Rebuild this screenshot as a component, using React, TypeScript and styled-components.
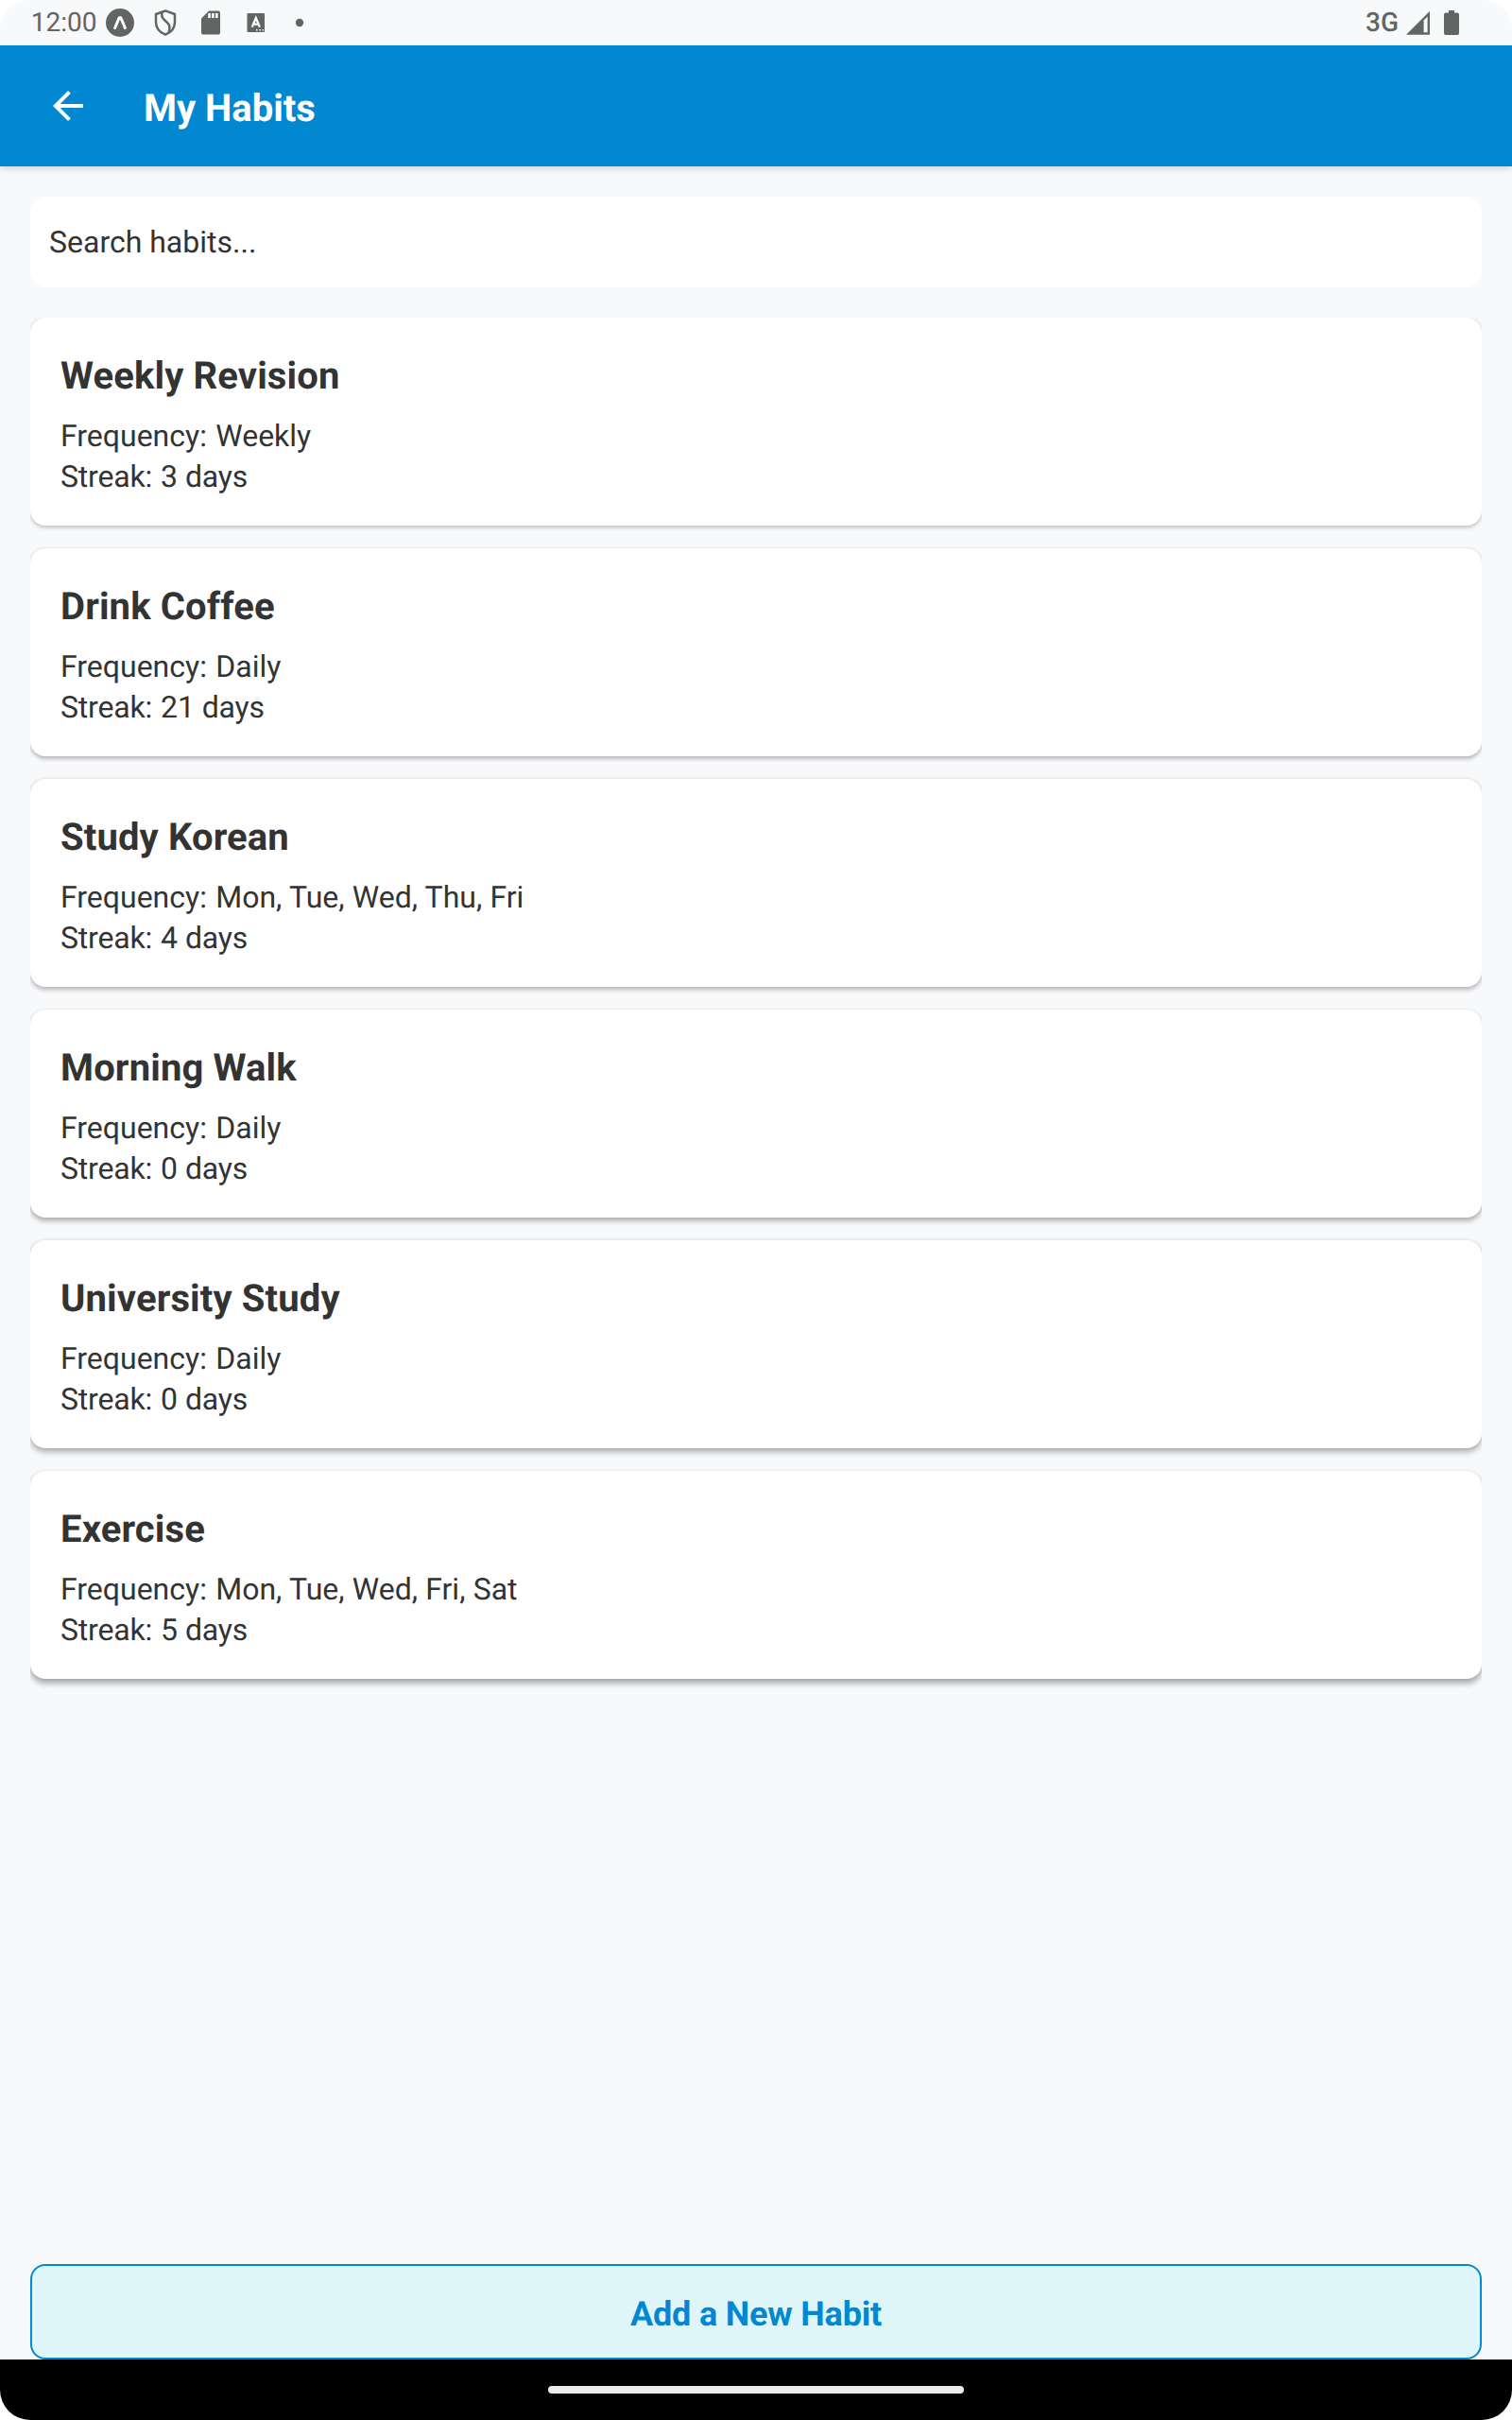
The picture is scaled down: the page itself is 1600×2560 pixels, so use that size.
import React from "react";
import styled, { createGlobalStyle } from "styled-components";

const color = {
  background: "#f8f9fb",
  primary: "#0288d1",
  surface: "#ffffff",
  text: "#333333",
  status: "#636564",
  action: "#def6f9",
};

const GlobalStyle = createGlobalStyle`
  body {
    margin: 0;
    background: #ffffff;
  }
  * {
    box-sizing: border-box;
  }
`;

const Screen = styled.div`
  display: flex;
  flex-direction: column;
  width: 1600px;
  height: 2560px;
  overflow: hidden;
  border-radius: 32px;
  background: ${color.background};
  color: ${color.text};
  font-family: Roboto, "Liberation Sans", sans-serif;
  text-rendering: geometricPrecision;
`;

const StatusBar = styled.div`
  z-index: 1;
  display: flex;
  justify-content: space-between;
  flex: none;
  height: 48px;
  padding: 0 56px 0 32.7px;
  background: ${color.background};
  color: ${color.status};
`;

const StatusGroup = styled.div<{ $gap?: number }>`
  display: flex;
  align-items: center;
  gap: ${({ $gap }) => $gap ?? 0}px;
`;

const Clock = styled.span`
  width: 70px;
  margin-right: 6.3px;
  font-size: 28px;
  line-height: 46px;
  white-space: nowrap;
`;

const Network = styled.span`
  width: 36px;
  margin-right: 7px;
  font-size: 28px;
  font-weight: 500;
  line-height: 48px;
  white-space: nowrap;
`;

const Glyph = styled.svg`
  display: block;
  flex: none;
`;

const NotificationIcons = styled.div`
  display: flex;
  margin-left: 6px;
`;

const Header = styled.header`
  display: flex;
  align-items: center;
  flex: none;
  height: 128px;
  padding-left: 48px;
  background: ${color.primary};
  color: #ffffff;
  box-shadow: 0 2px 8px rgba(0, 0, 0, 0.16);
`;

const BackButton = styled.button`
  display: flex;
  margin: 0 56px 0 0;
  padding: 0;
  border: 0;
  background: none;
  color: inherit;
`;

const HeaderTitle = styled.h1`
  margin: 0;
  padding-top: 5px;
  font-size: 40px;
  font-weight: 700;
  line-height: 48px;
`;

const Content = styled.main`
  display: flex;
  flex-direction: column;
  flex: 1;
  min-height: 0;
  padding: 32px 32px 0;
`;

const SearchInput = styled.input`
  flex: none;
  height: 96px;
  margin: 0 0 32px;
  padding: 0 20px;
  border: 0;
  border-radius: 16px;
  outline: none;
  background: ${color.surface};
  color: ${color.text};
  font: 400 32px / 40px Roboto, "Liberation Sans", sans-serif;
  text-rendering: inherit;

  &::placeholder {
    color: ${color.text};
    opacity: 1;
  }
`;

const HabitList = styled.div`
  display: flex;
  flex-direction: column;
  flex: 1;
  gap: 24px;
  min-height: 0;
  overflow: hidden;
`;

const HabitCard = styled.article<{ $depth: number }>`
  flex: none;
  height: 220px;
  padding: 35px 32px 0;
  border-radius: 16px;
  background: ${color.surface};
  box-shadow: 0 ${({ $depth }) => 2 + $depth * 0.45}px
      ${({ $depth }) => 4 + $depth * 0.5}px
      rgba(0, 0, 0, ${({ $depth }) => 0.22 + $depth * 0.02}),
    0 0 3px rgba(0, 0, 0, 0.08);
`;

const HabitName = styled.h2`
  margin: 0 0 15px;
  font-size: 40px;
  font-weight: 700;
  line-height: 54px;
  letter-spacing: 0.13px;
`;

const HabitDetail = styled.p<{ $tracking?: number }>`
  margin: 0;
  font-size: 32px;
  line-height: 43px;
  letter-spacing: ${({ $tracking }) => $tracking ?? 0}px;
  word-spacing: 0.3px;
`;

const DetailLabel = styled.span`
  margin-right: 1.1px;
`;

const AddButton = styled.button`
  flex: none;
  height: 101px;
  margin: 0;
  padding: 5px 0 0;
  border: 2px solid ${color.primary};
  border-radius: 16px;
  background: ${color.action};
  color: ${color.primary};
  font: 700 36px / 44px Roboto, "Liberation Sans", sans-serif;
  letter-spacing: -0.17px;
  text-rendering: inherit;
`;

const NavigationBar = styled.footer`
  display: flex;
  align-items: center;
  justify-content: center;
  flex: none;
  height: 64px;
  background: #000000;
`;

const HomeHandle = styled.div`
  width: 440px;
  height: 8px;
  border-radius: 4px;
  background: #ebebeb;
`;

const habits = [
  { name: "Weekly Revision", frequency: "Weekly", streak: 3 },
  { name: "Drink Coffee", frequency: "Daily", streak: 21 },
  { name: "Study Korean", frequency: "Mon, Tue, Wed, Thu, Fri", streak: 4 },
  { name: "Morning Walk", frequency: "Daily", streak: 0 },
  { name: "University Study", frequency: "Daily", streak: 0 },
  { name: "Exercise", frequency: "Mon, Tue, Wed, Fri, Sat", streak: 5 },
];

const ExpoIcon = () => (
  <Glyph width="36" height="48" viewBox="0 0 36 48">
    <circle cx="18" cy="24" r="15" fill={color.status} />
    <path d="M12.6 29.6 17.2 18.6h1.6l4.6 11" fill="none" stroke="#fff" strokeWidth="2.9" strokeLinecap="round" strokeLinejoin="round" />
  </Glyph>
);

const ShieldIcon = () => (
  <Glyph width="48" height="48" viewBox="0 0 48 48" fill="none" stroke={color.status} strokeWidth="2.5">
    <path d="M24 11.4 34 15v8.5c0 6.2-4.2 10.8-10 13.2-5.8-2.4-10-7-10-13.2V15Z" strokeLinejoin="round" />
    <path d="M20.7 12.8c-1.4 3.7-.2 6.3 2.7 8.7 4 3.3 6.3 5.3 4.4 12.3" />
  </Glyph>
);

const SdCardIcon = () => (
  <Glyph width="48" height="48" viewBox="0 0 48 48">
    <path d="M22 11.5h10a2 2 0 0 1 2 2v21a2 2 0 0 1-2 2H16a2 2 0 0 1-2-2V19.5Z" fill={color.status} />
    <path d="M21.2 14h2.6v5h-2.6zM25.1 14h2.6v5h-2.6zM29 14h2.6v5H29z" fill="#fff" />
  </Glyph>
);

const KeyboardIcon = () => (
  <Glyph width="48" height="48" viewBox="0 0 48 48">
    <rect x="14.5" y="14" width="18.5" height="20" rx="1" fill={color.status} />
    <path d="m19.8 28.7 4-9.7 4 9.7M21 25.7h5.6" fill="none" stroke="#fff" strokeWidth="2.2" />
    <path d="M24 31h1.5v1.5H24zM27.2 31h1.5v1.5h-1.5zM30.4 31h1.5v1.5h-1.5z" fill="#fff" />
  </Glyph>
);

const DotIcon = () => (
  <Glyph width="48" height="48" viewBox="0 0 48 48">
    <circle cx="22" cy="24" r="4.2" fill={color.status} />
  </Glyph>
);

const SignalIcon = () => (
  <Glyph width="26" height="48" viewBox="0 0 26 48">
    <path d="M25 11.7V36.7H0Z" fill={color.status} />
    <path d="M18.6 21.5 22.6 17.5V34.3h-4Z" fill={color.background} />
  </Glyph>
);

const BatteryIcon = () => (
  <Glyph width="16" height="48" viewBox="0 0 16 48">
    <path d="M5 11h6v2.5h3a2 2 0 0 1 2 2V35a2 2 0 0 1-2 2H2a2 2 0 0 1-2-2V15.5a2 2 0 0 1 2-2h3Z" fill={color.status} />
  </Glyph>
);

const BackIcon = () => (
  <Glyph width="48" height="48" viewBox="0 0 24 24" fill="currentColor">
    <path d="M20 11H7.83l5.59-5.59L12 4l-8 8 8 8 1.41-1.41L7.83 13H20v-2z" />
  </Glyph>
);

export default function App() {
  return (
    <>
      <GlobalStyle />
      <Screen>
        <StatusBar>
          <StatusGroup>
            <Clock>12:00</Clock>
            <ExpoIcon />
            <NotificationIcons>
              <ShieldIcon />
              <SdCardIcon />
              <KeyboardIcon />
              <DotIcon />
            </NotificationIcons>
          </StatusGroup>
          <StatusGroup>
            <Network>3G</Network>
            <StatusGroup $gap={14}>
              <SignalIcon />
              <BatteryIcon />
            </StatusGroup>
          </StatusGroup>
        </StatusBar>
        <Header>
          <BackButton aria-label="Back">
            <BackIcon />
          </BackButton>
          <HeaderTitle>My Habits</HeaderTitle>
        </Header>
        <Content>
          <SearchInput placeholder="Search habits..." />
          <HabitList>
            {habits.map((habit, index) => (
              <HabitCard key={habit.name} $depth={index}>
                <HabitName>{habit.name}</HabitName>
                <HabitDetail>
                  <DetailLabel>Frequency:</DetailLabel> {habit.frequency}
                </HabitDetail>
                <HabitDetail $tracking={-0.2}>
                  <DetailLabel>Streak:</DetailLabel> {habit.streak} days
                </HabitDetail>
              </HabitCard>
            ))}
          </HabitList>
          <AddButton>Add a New Habit</AddButton>
        </Content>
        <NavigationBar>
          <HomeHandle />
        </NavigationBar>
      </Screen>
    </>
  );
}
